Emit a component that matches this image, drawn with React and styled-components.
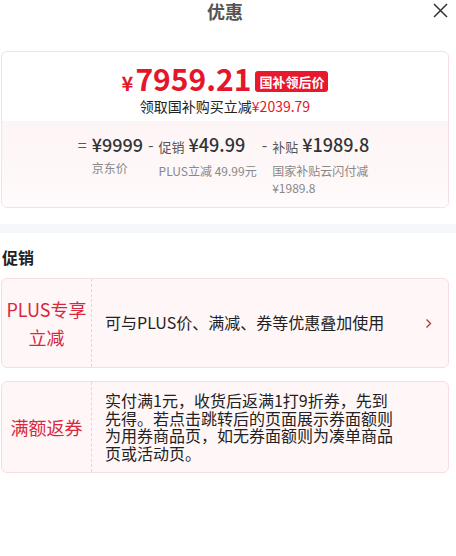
import React from "react";
import styled, { createGlobalStyle } from "styled-components";

const GlobalStyle = createGlobalStyle`
  * { box-sizing: border-box; }
  body {
    margin: 0;
    background: #fff;
    font-family: "Noto Sans CJK SC", "Noto Sans", sans-serif;
    color: #222;
  }
`;

const Page = styled.div`
  width: 456px;
  padding: 0 7px 0 1px;
`;

const Header = styled.div`
  display: grid;
  grid-template-columns: 1fr auto 1fr;
  align-items: center;
  height: 22px;
`;

const Title = styled.h2`
  grid-column: 2;
  margin: 0;
  font-size: 18px;
  line-height: 22px;
  font-weight: 700;
  color: #555;
`;

const Close = styled.button`
  justify-self: end;
  margin-right: 1px;
  margin-top: -2px;
  padding: 0;
  border: 0;
  background: none;
  display: flex;
  cursor: pointer;
`;

const PriceCard = styled.section`
  margin-top: 29px;
  border: 1px solid #f6e0e3;
  border-radius: 6px;
  overflow: hidden;
`;

const PriceTop = styled.div`
  padding: 11px 0 6px;
  display: flex;
  flex-direction: column;
  align-items: center;
`;

const PriceRow = styled.div`
  display: flex;
  align-items: center;
  height: 34px;
`;

const BigPrice = styled.span`
  color: #e4162b;
  font-weight: 700;
  font-size: 30px;
  line-height: 34px;

  & > small {
    font-size: 20px;
    margin-right: 2px;
  }
`;

const Badge = styled.span`
  margin-left: 4px;
  margin-top: 2px;
  padding: 0 4px;
  height: 21px;
  line-height: 21px;
  border-radius: 3px;
  background: #e8192c;
  color: #fff;
  font-size: 13px;
  font-weight: 700;
`;

const SubLine = styled.div`
  font-size: 14px;
  line-height: 18px;
  color: #222;

  & > em {
    font-style: normal;
    color: #e4162b;
  }
`;

const PriceBottom = styled.div`
  padding: 11px 0 11px;
  background: linear-gradient(#fdf4f5, #fffafb);
  display: flex;
  justify-content: center;
  align-items: flex-start;
  gap: 5px;
`;

const Column = styled.div`
  display: flex;
  align-items: flex-start;
`;

const Op = styled.span`
  font-size: 16px;
  line-height: 24px;
  color: #555;
  margin-right: 5px;
`;

const Block = styled.div`
  display: flex;
  flex-direction: column;
  max-width: ${({ $max }) => ($max ? `${$max}px` : "none")};
`;

const Amount = styled.div`
  font-size: 18px;
  line-height: 24px;
  font-weight: 500;
  color: #333;
  white-space: nowrap;

  & > small {
    font-size: 13px;
    font-weight: 400;
    color: #555;
    margin-right: 4px;
  }
`;

const Label = styled.div`
  margin-top: 3px;
  font-size: 12px;
  line-height: 17px;
  color: #888;
`;

const Divider = styled.div`
  margin: 16px -7px 0 -1px;
  height: 9px;
  background: #f6f7fb;
`;

const SectionTitle = styled.h3`
  margin: 13px 0 0 1px;
  font-size: 16px;
  line-height: 22px;
  font-weight: 700;
  color: #222;
`;

const PromoList = styled.div`
  margin-top: 10px;
  display: flex;
  flex-direction: column;
  gap: 13px;
`;

const PromoCard = styled.div`
  display: grid;
  grid-template-columns: 90px 1fr 40px;
  min-height: 90px;
  border: 1px solid #f6dde0;
  border-radius: 6px;
  background: #fff6f7;
`;

const PromoName = styled.div`
  display: flex;
  align-items: center;
  justify-content: center;
  border-right: 1px dashed #ead3d6;
  text-align: center;
  font-size: 18px;
  line-height: 28px;
  color: #d9283d;
`;

const PromoDesc = styled.div`
  align-self: center;
  padding: 10px 10px 10px 13px;
  font-size: 16px;
  line-height: 17.6px;
  color: #222;
`;

const Arrow = styled.div`
  display: flex;
  align-items: center;
  justify-content: center;
  padding-top: 1px;
`;

const promos = [
  {
    name: (
      <>
        PLUS专享
        <br />
        立减
      </>
    ),
    desc: "可与PLUS价、满减、券等优惠叠加使用",
    arrow: true,
  },
  {
    name: "满额返券",
    desc: "实付满1元，收货后返满1打9折券，先到先得。若点击跳转后的页面展示券面额则为用券商品页，如无券面额则为凑单商品页或活动页。",
    arrow: false,
  },
];

export default function App() {
  return (
    <Page>
      <GlobalStyle />
      <Header>
        <Title>优惠</Title>
        <Close aria-label="关闭">
          <svg width="15" height="15" viewBox="0 0 15 15">
            <path d="M1 1L14 14M14 1L1 14" stroke="#333" strokeWidth="1.5" fill="none" />
          </svg>
        </Close>
      </Header>

      <PriceCard>
        <PriceTop>
          <PriceRow>
            <BigPrice>
              <small>¥</small>7959.21
            </BigPrice>
            <Badge>国补领后价</Badge>
          </PriceRow>
          <SubLine>
            领取国补购买立减<em>¥2039.79</em>
          </SubLine>
        </PriceTop>
        <PriceBottom>
          <Column>
            <Op>=</Op>
            <Block>
              <Amount>¥9999</Amount>
              <Label>京东价</Label>
            </Block>
          </Column>
          <Column>
            <Op>-</Op>
            <Block>
              <Amount>
                <small>促销</small>¥49.99
              </Amount>
              <Label>PLUS立减 49.99元</Label>
            </Block>
          </Column>
          <Column>
            <Op>-</Op>
            <Block $max={100}>
              <Amount>
                <small>补贴</small>¥1989.8
              </Amount>
              <Label>国家补贴云闪付减¥1989.8</Label>
            </Block>
          </Column>
        </PriceBottom>
      </PriceCard>

      <Divider />

      <SectionTitle>促销</SectionTitle>
      <PromoList>
        {promos.map((p, i) => (
          <PromoCard key={i}>
            <PromoName>{p.name}</PromoName>
            <PromoDesc>{p.desc}</PromoDesc>
            <Arrow>
              {p.arrow && (
                <svg width="7" height="11" viewBox="0 0 7 11">
                  <path d="M1.5 1.5L5.5 5.5L1.5 9.5" stroke="#a8353f" strokeWidth="1.3" fill="none" />
                </svg>
              )}
            </Arrow>
          </PromoCard>
        ))}
      </PromoList>
    </Page>
  );
}
